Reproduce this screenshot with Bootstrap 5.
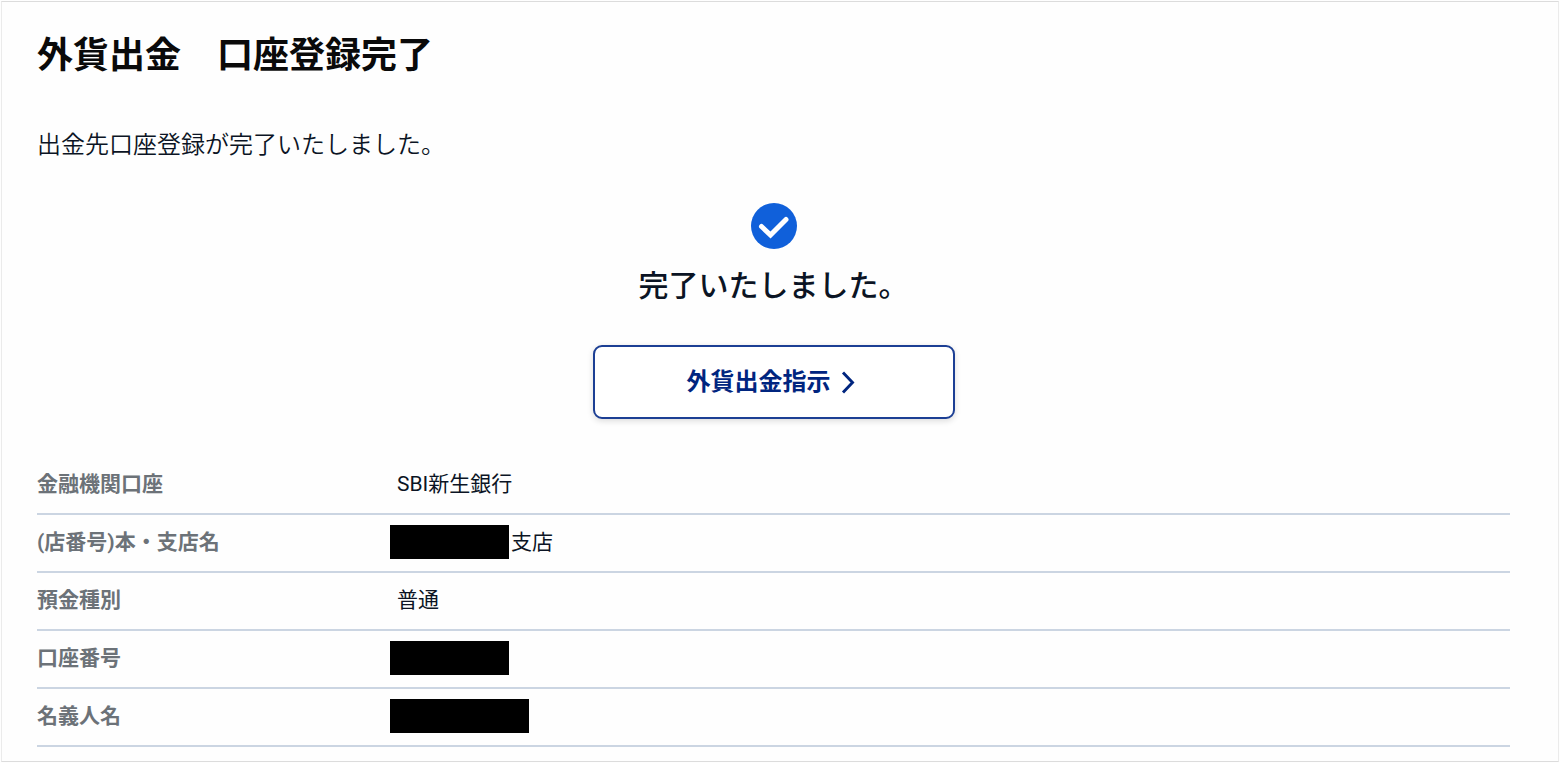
<!DOCTYPE html>
<html lang="ja">
<head>
<meta charset="utf-8">
<meta name="viewport" content="width=device-width, initial-scale=1">
<title>外貨出金 口座登録完了</title>
<link href="https://cdn.jsdelivr.net/npm/bootstrap@5.3.0/dist/css/bootstrap.min.css" rel="stylesheet">
<style>
  body { font-family: Roboto, "Noto Sans CJK JP", sans-serif; color: #0b1424; padding: 1px 1px 0; background: #fefefe; }
  .page-frame { border: 1px solid #dcdcdc; border-left-color: #ebebeb; border-right-color: #ebebeb; padding: 29px 48px 14px 35px; }
  .page-title { font-size: 36px; line-height: 50px; font-weight: 700; color: #0a0a0a; margin-bottom: 46px; }
  .lead-text { font-size: 24px; line-height: 36px; font-weight: 350; margin-bottom: 40px; }
  .done-text { font-size: 30px; line-height: 44px; font-weight: 500; margin: 15px 0 37px; }
  .btn-next { width: 362px; max-width: 100%; height: 74px; border: 2px solid #1c3f94; border-radius: 9px; background: #fff; color: #00257f; font-size: 24px; font-weight: 700; box-shadow: 0 2px 6px rgba(0,0,0,.14); }
  .btn-next:hover { background: #f2f6ff; color: #00257f; border-color: #1c3f94; }
  .account-table { font-size: 21px; line-height: 30px; margin: 37px 0 0; }
  .account-table th, .account-table td { height: 58px; padding: 0 0 2px; vertical-align: middle; border-bottom: 2px solid #cbd5e2; background: transparent; }
  .account-table th { width: 353px; font-weight: 700; color: #6c7278; }
  .account-table td { color: #0b1424; }
  .value-text { padding-left: 7px; }
  .redacted { width: 119px; height: 34px; background: #000; }
  .redacted-wide { width: 139px; }
  .redacted-row { gap: 2px; }
</style>
</head>
<body>
<main class="page-frame">
  <h1 class="page-title">外貨出金　口座登録完了</h1>
  <p class="lead-text">出金先口座登録が完了いたしました。</p>
  <section class="d-flex flex-column align-items-center">
    <svg width="46" height="46" viewBox="0 0 46 46" aria-hidden="true">
      <circle cx="23" cy="23" r="23" fill="#1060da"/>
      <path d="M10.500 23.500 L19.500 32 L35 16.500" fill="none" stroke="#fff" stroke-width="5" stroke-linecap="round" stroke-linejoin="miter"/>
    </svg>
    <h2 class="done-text">完了いたしました。</h2>
    <a href="#" class="btn btn-next d-inline-flex align-items-center justify-content-center gap-2">
      <span>外貨出金指示</span>
      <svg width="22" height="24" viewBox="0 0 22 24" aria-hidden="true"><path d="M4 2.500 L13.500 12.500 L4 22.500" fill="none" stroke="#00257f" stroke-width="2.900"/></svg>
    </a>
  </section>
  <table class="table account-table">
    <tbody>
      <tr><th scope="row">金融機関口座</th><td><div class="value-text">SBI新生銀行</div></td></tr>
      <tr><th scope="row">(店番号)本・支店名</th><td><div class="redacted-row d-flex align-items-center"><span class="redacted"></span><span>支店</span></div></td></tr>
      <tr><th scope="row">預金種別</th><td><div class="value-text">普通</div></td></tr>
      <tr><th scope="row">口座番号</th><td><div class="redacted"></div></td></tr>
      <tr><th scope="row">名義人名</th><td><div class="redacted redacted-wide"></div></td></tr>
    </tbody>
  </table>
</main>
<script src="https://cdn.jsdelivr.net/npm/bootstrap@5.3.0/dist/js/bootstrap.bundle.min.js"></script>
</body>
</html>
